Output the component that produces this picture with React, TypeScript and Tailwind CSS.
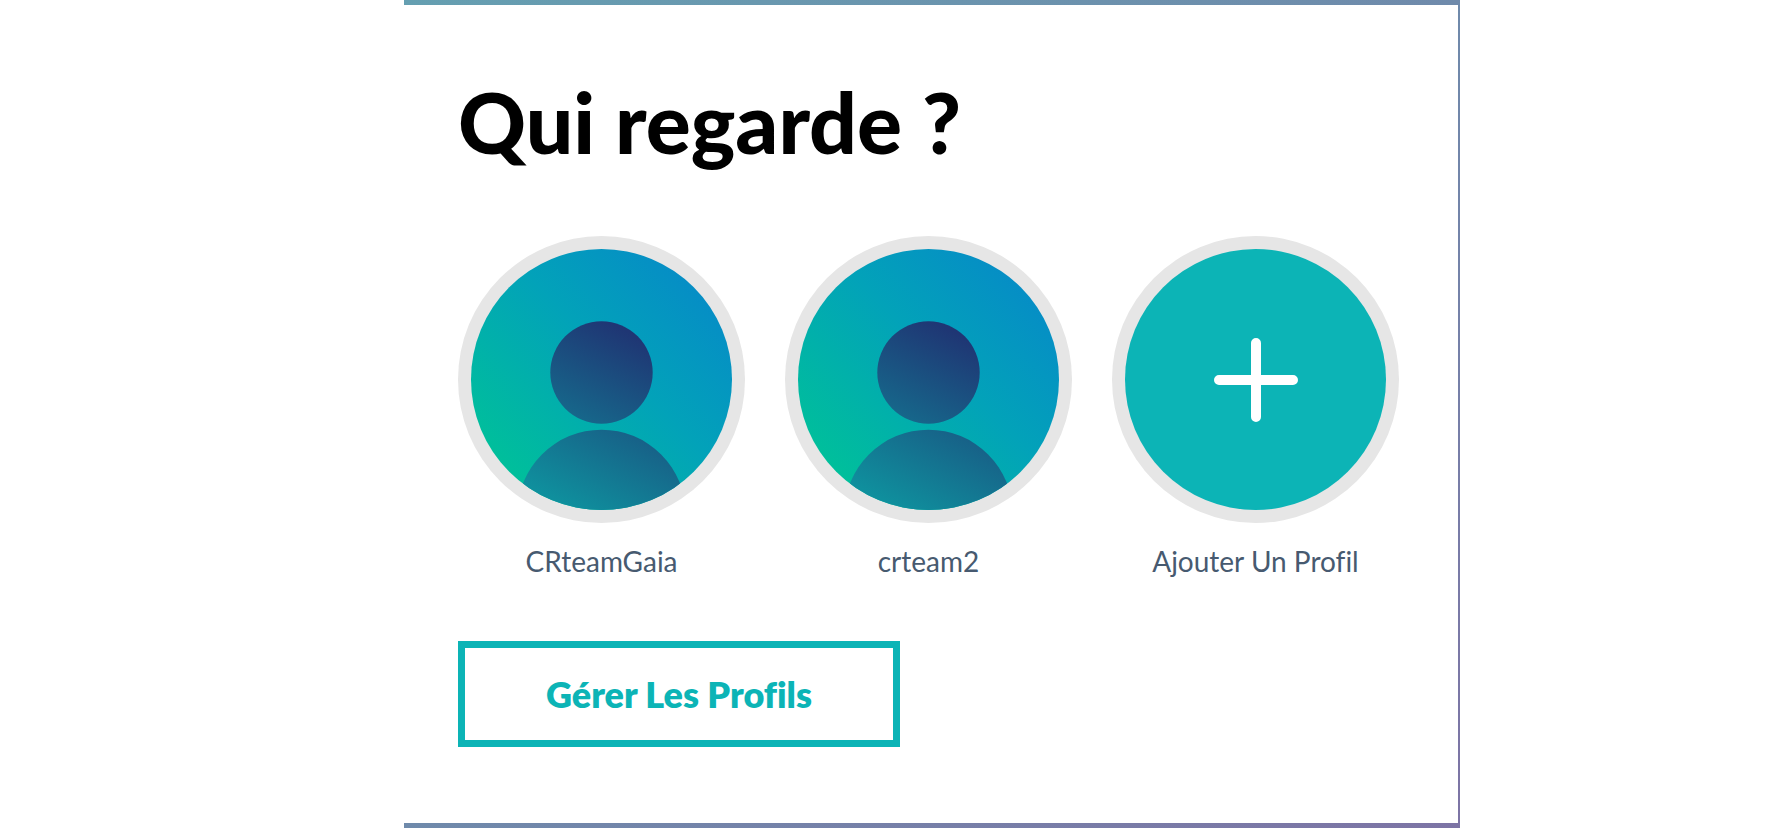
import { useId } from "react";

const profiles = ["CRteamGaia", "crteam2"];

function Avatar() {
  const id = useId();
  return (
    <svg viewBox="0 0 260 260" className="h-full w-full" aria-hidden="true">
      <defs>
        <linearGradient id={`${id}-bg`} x1="38" y1="222" x2="234" y2="26" gradientUnits="userSpaceOnUse">
          <stop offset="0" stopColor="#00bf9b" />
          <stop offset="0.55" stopColor="#02a2b9" />
          <stop offset="1" stopColor="#068bc7" />
        </linearGradient>
        <linearGradient id={`${id}-fg`} x1="85" y1="250" x2="170" y2="90" gradientUnits="userSpaceOnUse">
          <stop offset="0" stopColor="#0f8f9d" />
          <stop offset="1" stopColor="#1f3674" />
        </linearGradient>
        <clipPath id={`${id}-clip`}>
          <circle cx="130" cy="130" r="130" />
        </clipPath>
      </defs>
      <g clipPath={`url(#${id}-clip)`}>
        <rect width="260" height="260" fill={`url(#${id}-bg)`} />
        <g fill={`url(#${id}-fg)`}>
          <circle cx="130" cy="123" r="51" />
          <ellipse cx="130" cy="264" rx="84" ry="84" />
        </g>
      </g>
    </svg>
  );
}

function ProfileButton({ label, children }: { label: string; children: React.ReactNode }) {
  return (
    <button type="button" className="flex w-[287px] cursor-pointer flex-col items-center gap-5">
      <span className="block size-[287px] overflow-hidden rounded-full bg-[#e6e6e6] p-[13px]">{children}</span>
      <span className="text-[28px] leading-9 text-[#475a70]">{label}</span>
    </button>
  );
}

export default function App() {
  return (
    <div className="flex min-h-screen justify-center bg-white pl-[72px] font-['Lato',sans-serif] [font-variant-ligatures:none]">
      <div className="flex w-full max-w-[1056px] bg-linear-to-br from-[#659fb1] via-[#6f8aab] to-[#7d74a5] pt-[5px] pr-[2px] pb-[5px]">
        <main className="w-full bg-white px-[54px] pt-[62px] pb-[76px]">
          <h1 className="text-[84px] leading-[110px] font-black text-black">Qui regarde ?</h1>

          <div className="mt-[59px] flex flex-wrap gap-10">
            {profiles.map((name) => (
              <ProfileButton key={name} label={name}>
                <Avatar />
              </ProfileButton>
            ))}
            <ProfileButton label="Ajouter Un Profil">
              <span className="flex h-full w-full items-center justify-center rounded-full bg-[#0cb4b6]">
                <svg viewBox="0 0 84 84" className="size-[84px]" stroke="#fff" strokeWidth="10" strokeLinecap="round" aria-hidden="true">
                  <path d="M42 5v74M5 42h74" />
                </svg>
              </span>
            </ProfileButton>
          </div>

          <button
            type="button"
            className="mt-[62px] h-[106px] w-[442px] cursor-pointer border-[7px] border-[#0cb4b6] text-[36px] font-extrabold text-[#0cb4b6]"
          >
            Gérer Les Profils
          </button>
        </main>
      </div>
    </div>
  );
}
